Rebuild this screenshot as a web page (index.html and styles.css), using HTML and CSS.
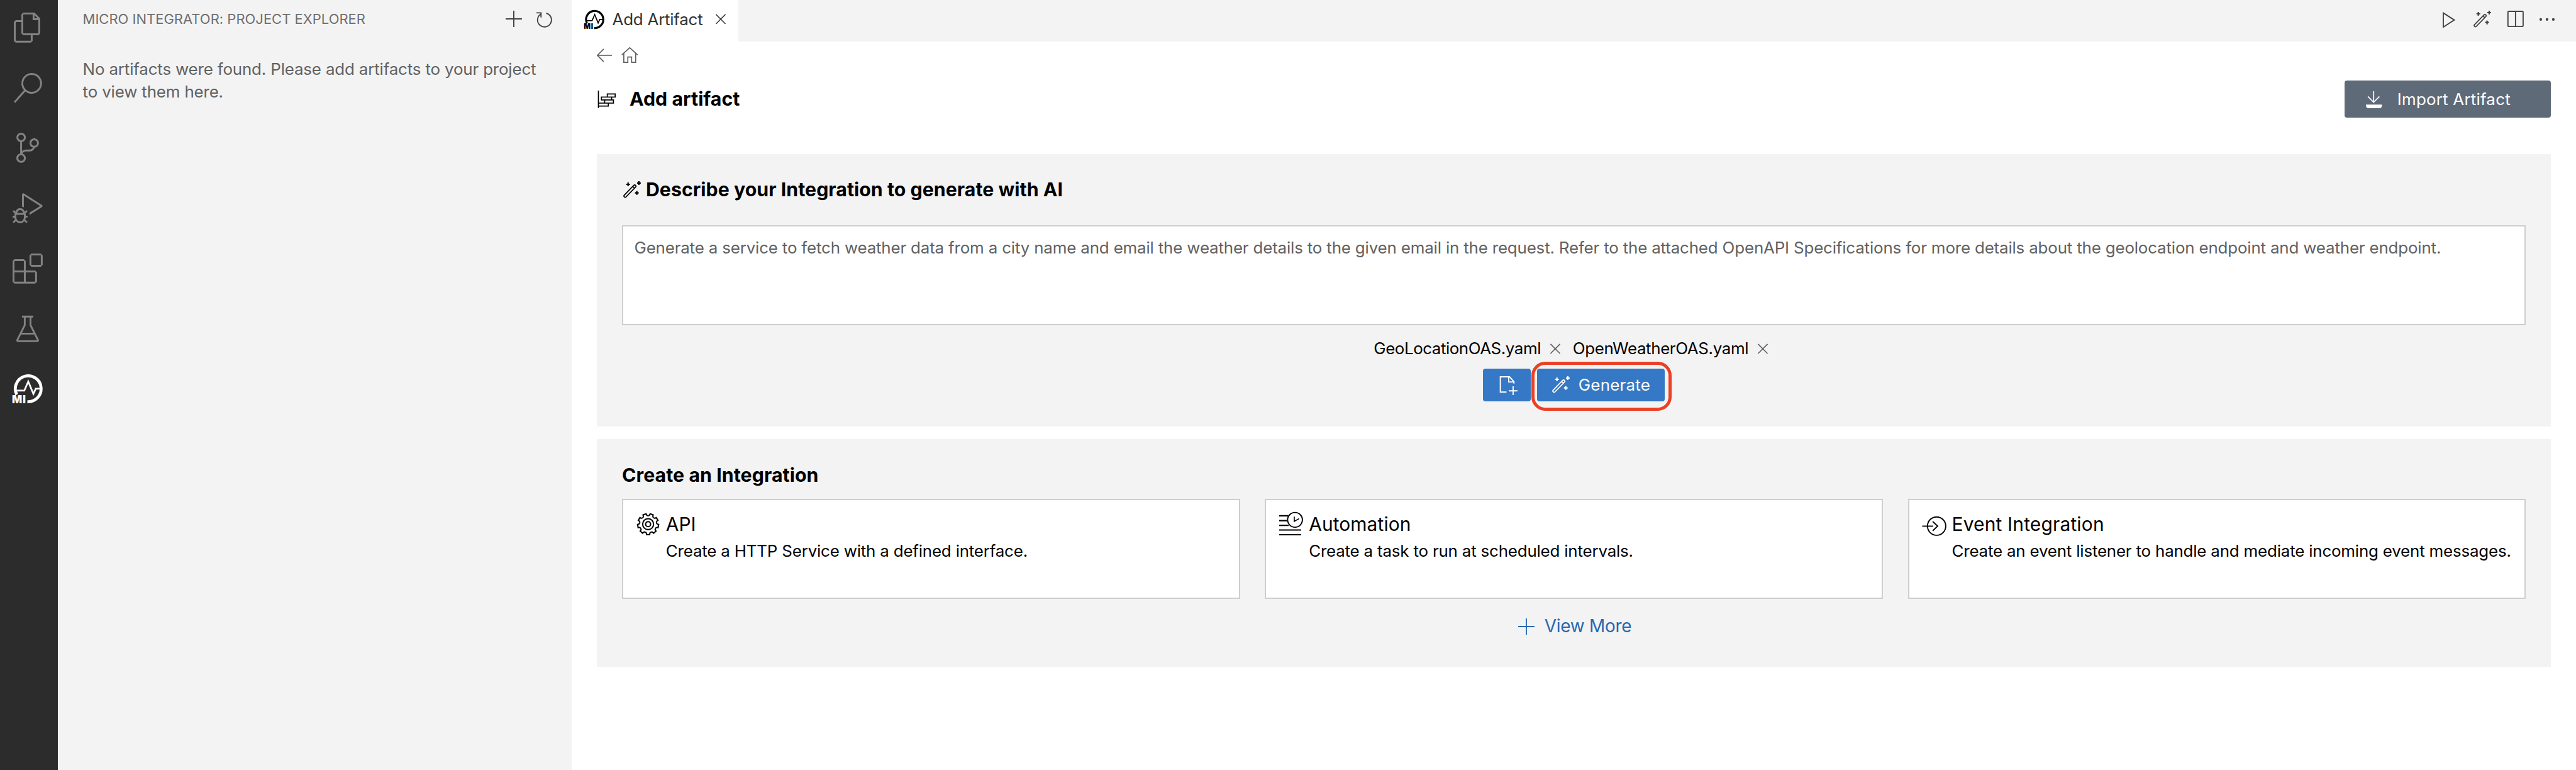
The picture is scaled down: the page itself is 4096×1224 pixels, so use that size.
FILE: index.html
```html
<!DOCTYPE html>
<html lang="en">
<head>
<meta charset="utf-8">
<title>Add Artifact</title>
<link rel="stylesheet" href="styles.css">
</head>
<body>
<svg class="defs" width="0" height="0" aria-hidden="true">
  <symbol id="mi" viewBox="0 0 48 48">
    <path d="M6.6 33.4A20.6 20.6 0 1 1 23.6 44.6" fill="none" stroke="currentColor" stroke-width="4.8"/>
    <path d="M6.5 27H18.7L25 12.4L33.2 32.2L37 24H44" fill="none" stroke="currentColor" stroke-width="2.7"/>
  </symbol>
  <symbol id="wand" viewBox="0 0 28 28">
    <path d="M1.5 22.4L17 6.5a2 2 0 0 1 2.8 2.8L4.3 25.2a2 2 0 0 1-2.8-2.8zM15.2 8.4l2.8 2.8" fill="none" stroke="currentColor" stroke-width="1.8"/>
    <path d="M7.7 2v6M4.7 5h6M25 0v6M22 3h6M21.7 15.7v6M18.7 18.7h6" fill="none" stroke="currentColor" stroke-width="2.2"/>
  </symbol>
  <symbol id="close" viewBox="0 0 18 18">
    <path d="M1 1L17 17M17 1L1 17" fill="none" stroke="currentColor" stroke-width="1.8"/>
  </symbol>
  <symbol id="plus" viewBox="0 0 26 26">
    <path d="M13 0V26M0 13H26" fill="none" stroke="currentColor" stroke-width="1.9"/>
  </symbol>
  <defs>
    <path id="tooth" d="M-4.65-12.78C-3.6-13.2-2.9-13.4-2.8-14.4L-2.5-16.6H2.5L2.8-14.4C2.9-13.4 3.6-13.2 4.65-12.78"/>
  </defs>
</svg>
<div class="window">
  <nav class="activity">
    <svg class="act" viewBox="0 0 24 24"><path d="M17.5 0h-9L7 1.5V6H2.5L1 7.5v15.07L2.5 24h12.07L16 22.57V18h4.7l1.3-1.43V4.5L17.5 0zm0 2.12l2.38 2.38H17.5V2.12zm-3 20.38h-12v-15H7v9.07L8.5 18h6v4.5zm6-6h-12v-15H16V6h4.5v10.5z"/></svg>
    <svg class="act" viewBox="0 0 24 24"><path d="M15.25 0a8.25 8.25 0 0 0-6.18 13.72L1 22.88l1.12 1 8.05-9.12A8.251 8.251 0 1 0 15.25.01V0zm0 15a6.75 6.75 0 1 1 0-13.5 6.75 6.75 0 0 1 0 13.5z"/></svg>
    <svg class="act" viewBox="0 0 24 24"><path d="M21.007 8.222A3.738 3.738 0 0 0 15.045 5.2a3.737 3.737 0 0 0 1.156 6.583 2.988 2.988 0 0 1-2.668 1.67h-2.99a4.456 4.456 0 0 0-2.989 1.165V7.4a3.737 3.737 0 1 0-1.494 0v9.117a3.776 3.776 0 1 0 1.816.099 2.99 2.99 0 0 1 2.668-1.667h2.99a4.484 4.484 0 0 0 4.223-3.039 3.736 3.736 0 0 0 3.25-3.687zM4.565 3.738a2.242 2.242 0 1 1 4.484 0 2.242 2.242 0 0 1-4.484 0zm4.484 16.441a2.242 2.242 0 1 1-4.484 0 2.242 2.242 0 0 1 4.484 0zm8.221-9.715a2.242 2.242 0 1 1 0-4.485 2.242 2.242 0 0 1 0 4.485z"/></svg>
    <svg class="act" viewBox="0 0 24 24"><path d="M10.94 13.5l-1.32 1.32a3.73 3.73 0 0 0-7.24 0L1.06 13.5 0 14.56l1.72 1.72-.22.22V18H0v1.5h1.5v.08c.077.489.214.966.41 1.42L0 22.94 1.06 24l1.65-1.65A4.308 4.308 0 0 0 6 24a4.31 4.31 0 0 0 3.29-1.65L10.94 24 12 22.94 10.09 21c.198-.464.336-.951.41-1.45v-.1H12V18h-1.5v-1.5l-.22-.22L12 14.56l-1.06-1.06zM6 13.5a2.25 2.25 0 0 1 2.25 2.25h-4.5A2.25 2.25 0 0 1 6 13.5zm3 6a3.33 3.33 0 0 1-3 3 3.33 3.33 0 0 1-3-3v-2.25h6v2.25zm14.76-9.9v1.26L13.5 17.37V15.6l8.5-5.37L9 2v9.46a5.07 5.07 0 0 0-1.5-.72V.63L8.64 0l15.12 9.6z"/></svg>
    <svg class="act" viewBox="0 0 24 24"><path d="M13.5 1.5L15 0h7.5L24 1.5V9l-1.5 1.5H15L13.5 9V1.5zm1.5 0V9h7.5V1.5H15zM0 15V6l1.5-1.5H9L10.5 6v7.5H18l1.5 1.5v7.5L18 24H1.5L0 22.5V15zm9-1.5V6H1.5v7.5H9zM9 15H1.5v7.5H9V15zm1.5 7.5H18V15h-7.5v7.5z"/></svg>
    <svg class="act line" viewBox="0 0 24 24"><path d="M7.5 2.15H16.5M9.7 2.15V9L3.8 20.7Q3.5 21.75 4.6 21.75H19.4Q20.5 21.75 20.2 20.7L14.3 9V2.15M6.6 15.75H17.4"/></svg>
    <svg class="act on" viewBox="0 0 48 48"><use href="#mi"/><text class="mi-text" x="-1" y="46.7" textLength="22">MI</text></svg>
  </nav>

  <aside class="sidebar">
    <header class="side-head">
      <span class="side-title">MICRO INTEGRATOR: PROJECT EXPLORER</span>
      <svg class="i26 side-plus" viewBox="0 0 26 26"><use href="#plus"/></svg>
      <svg class="i26 line" viewBox="0 0 26 26"><path class="w19" d="M1 2.4H8.3V9.7M8.3 3.9L7.4 4.7A11.1 11.1 0 1 0 16.6 3"/></svg>
    </header>
    <p class="side-text">No artifacts were found. Please add artifacts to your project<br>to view them here.</p>
  </aside>

  <main class="editor">
    <div class="tabbar">
      <div class="tab">
        <svg class="tab-mi" viewBox="0 0 48 48"><use href="#mi"/><text class="mi-text" x="-1" y="46.7" textLength="22">MI</text></svg>
        <span class="tab-text">Add Artifact</span>
        <svg class="x" viewBox="0 0 18 18"><use href="#close"/></svg>
      </div>
      <div class="actions">
        <svg class="i28 line" viewBox="0 0 28 28"><path class="w19" d="M5 3.6V26.2L22.6 14.9Z"/></svg>
        <svg class="i28" viewBox="0 0 28 28"><use href="#wand"/></svg>
        <svg class="i28 line" viewBox="0 0 28 28"><rect class="w19" x="2.8" y="1" width="24.2" height="24.2" rx="1.6"/><path class="w19" d="M14.9 1V25"/></svg>
        <svg class="i28" viewBox="0 0 28 28"><circle cx="4" cy="14" r="2.1"/><circle cx="14" cy="14" r="2.1"/><circle cx="24" cy="14" r="2.1"/></svg>
      </div>
    </div>

    <div class="nav">
      <svg class="i26 line" viewBox="0 0 26 26"><path class="w17" d="M24 13H1.2M11 2.8L.9 13L11 23.2"/></svg>
      <svg class="i26 line" viewBox="0 0 26 26"><path class="w17" d="M.8 12.2L13.3.9L25.8 12.2M3.9 9.6V24.2H10.3V15.6H16.4V24.2H22.8V9.6"/></svg>
    </div>

    <div class="page-head">
      <svg class="art-icon line" viewBox="0 0 30 30"><path class="w17" d="M2.5 1V28.8M16.7 6.3H29.3V11.3H16.7ZM7.3 11.3H23.6V15.9H7.3ZM12.5 16H26.5V21H12.5ZM2.5 21H18.3V25.7H2.5"/></svg>
      <h1 class="h">Add artifact</h1>
      <button class="import">
        <svg class="i28 line" viewBox="0 0 28 28"><path class="w17" d="M13.3 0V17.8M4.2 8.4L13.3 17.6L22.4 8.4"/><path class="tray" d="M1 21.3H26.6Q26.6 27 23 27H4.6Q1 27 1 21.3Z"/></svg>
        <span>Import Artifact</span>
      </button>
    </div>

    <section class="panel ai">
      <div class="ai-head"><svg class="i28" viewBox="0 0 28 28"><use href="#wand"/></svg><h2 class="h">Describe your Integration to generate with AI</h2></div>
      <div class="prompt">Generate a service to fetch weather data from a city name and email the weather details to the given email in the request. Refer to the attached OpenAPI Specifications for more details about the geolocation endpoint and weather endpoint.</div>
      <div class="files">
        <span class="file geo">GeoLocationOAS.yaml</span><svg class="x" viewBox="0 0 18 18"><use href="#close"/></svg>
        <span class="file weather">OpenWeatherOAS.yaml</span><svg class="x" viewBox="0 0 18 18"><use href="#close"/></svg>
      </div>
      <div class="buttons">
        <button class="btn attach"><svg class="i30 line" viewBox="0 0 30 30"><path class="w19" d="M23.3 11.8V8.7L16.4 1H1.6V25.4H11.5M15 1V9.2H23.3M22 16V30M15 23.3H29"/></svg></button>
        <button class="btn generate"><svg class="i28" viewBox="0 0 28 28"><use href="#wand"/></svg><span>Generate</span><i class="highlight"></i></button>
      </div>
    </section>

    <section class="panel create">
      <h2 class="h">Create an Integration</h2>
      <div class="cards">
        <article class="card">
          <svg class="card-icon line" viewBox="0 0 40 40"><g class="w21" transform="translate(19.6 20.3)">
            <use href="#tooth" transform="rotate(20)"/>
            <use href="#tooth" transform="rotate(60)"/>
            <use href="#tooth" transform="rotate(100)"/>
            <use href="#tooth" transform="rotate(140)"/>
            <use href="#tooth" transform="rotate(180)"/>
            <use href="#tooth" transform="rotate(220)"/>
            <use href="#tooth" transform="rotate(260)"/>
            <use href="#tooth" transform="rotate(300)"/>
            <use href="#tooth" transform="rotate(340)"/>
            <circle r="8.7"/><circle r="4"/></g></svg>
          <div><h3 class="card-title">API</h3><p class="card-text">Create a HTTP Service with a defined interface.</p></div>
        </article>
        <article class="card">
          <svg class="card-icon line" viewBox="0 0 40 40"><path class="w21" d="M1 6.9H15.5M1 14.7H13.2M1 22.2H16M1 29.6H36M1 37.1H36"/><circle class="w19" cx="26.2" cy="13.4" r="11.8"/><path class="w17" d="M25 8.3V15.8L32.8 11.4"/></svg>
          <div><h3 class="card-title auto">Automation</h3><p class="card-text">Create a task to run at scheduled intervals.</p></div>
        </article>
        <article class="card">
          <svg class="card-icon line" viewBox="0 0 40 40"><circle class="w19" cx="23.4" cy="23.4" r="14.6"/><path class="w19" d="M.5 23.4H18M17.2 16L25 23.4L17.2 30.8"/></svg>
          <div><h3 class="card-title event">Event Integration</h3><p class="card-text">Create an event listener to handle and mediate incoming event messages.</p></div>
        </article>
      </div>
      <a class="more"><svg class="i26" viewBox="0 0 26 26"><use href="#plus"/></svg><span>View More</span></a>
    </section>
  </main>
</div>
</body>
</html>
```
FILE: styles.css
```css
html { font-size: 9.9708px; }
* { box-sizing: border-box; margin: 0; padding: 0; }
body { background: #fff; font-family: Inter, "Liberation Sans", sans-serif; font-size: 2.6rem; line-height: 3.6rem; letter-spacing: -0.017rem; color: #000; }
svg { display: block; flex: none; fill: currentColor; overflow: visible; }
.defs { position: absolute; }
button { border: 0; font: inherit; color: #fff; }
.line { fill: none; stroke: currentColor; }
.tray { fill: currentColor; stroke: none; }
.w17 { stroke-width: 1.7; }
.w19 { stroke-width: 1.9; }
.w21 { stroke-width: 2.1; }
.i26 { width: 2.6rem; height: 2.6rem; }
.i28 { width: 2.8rem; height: 2.8rem; }
.i30 { width: 3rem; height: 3rem; }
.x { width: 1.8rem; height: 1.7rem; }
.h { font-size: 3.04rem; font-weight: 700; line-height: 4rem; letter-spacing: 0.003rem; }

.window { display: flex; width: 100vw; height: 100vh; overflow: hidden; }

.activity { flex: none; display: flex; flex-direction: column; gap: 4.8rem; width: 9.2rem; padding: 2rem 0 0 2rem; background: #2c2c2c; color: #838383; }
.act { width: 4.8rem; height: 4.8rem; }
.act.line { stroke-width: 1.45; }
.on { color: #fff; }
.mi-text { font: 900 17px Inter, "Liberation Sans", sans-serif; letter-spacing: 0; }

.sidebar { flex: none; width: 82rem; background: #f3f3f3; color: #616161; }
.side-head { display: flex; align-items: center; height: 6.2rem; padding: 0 3.1rem 0 4rem; color: #424242; }
.side-title { flex: 1; font-size: 2.2rem; letter-spacing: 0.004rem; color: #6f6f6f; }
.side-plus { margin: -0.2rem 2.3rem 0 0; }
.side-text { padding: 3.05rem 0 0 4rem; letter-spacing: -0.016rem; }

.editor { flex: 1; min-width: 0; display: flex; flex-direction: column; }
.tabbar { display: flex; justify-content: space-between; height: 6.6rem; padding-bottom: 0.4rem; background: #f3f3f3; color: #424242; }
.tab { display: flex; align-items: center; width: 26.5rem; height: 6.6rem; padding: 0 0 0.4rem 2rem; background: #fff; }
.tab-mi { width: 3.2rem; height: 3.2rem; margin-right: 1.25rem; color: #000; }
.tab-text { flex: 1; letter-spacing: -0.024rem; color: #333; }
.tab .x { margin-right: 1.85rem; }
.actions { display: flex; align-items: center; gap: 2.5rem; padding-right: 3.2rem; }
.actions .i28:nth-child(4) { margin-left: -0.2rem; }

.nav { display: flex; align-items: center; gap: 1.3rem; height: 4.4rem; padding-left: 4rem; color: #616161; }
.page-head { display: flex; align-items: center; height: 9.2rem; margin: 0.2rem 0 4.2rem; padding: 0 4rem; }
.art-icon { width: 3rem; height: 3rem; margin-right: 2.2rem; }
.page-head .h { flex: 1; }
.import { display: flex; align-items: center; gap: 2.3rem; width: 32.9rem; height: 6rem; padding-left: 3.3rem; border-radius: 0.4rem; background: #5f6a79; letter-spacing: 0.022rem; }
.import svg { margin-top: 0.2rem; }

.panel { margin: 0 4rem 2rem; padding: 0 4rem; background: #f3f3f3; }
.ai { height: 43.4rem; padding-top: 3.7rem; }
.ai-head { display: flex; align-items: center; gap: 0.8rem; padding-left: 0.2rem; }
.prompt { height: 16rem; margin-top: 3.6rem; padding: 1.6rem 1.75rem; border: 2px solid #cecece; background: #fff; color: #616161; white-space: nowrap; }
.files { display: flex; align-items: center; justify-content: center; height: 3rem; margin-top: 2.2rem; padding-right: 0.9rem; color: #616161; }
.file { color: #000; white-space: nowrap; margin-right: 1.4rem; }
.geo { letter-spacing: -0.045rem; }
.weather { margin-left: 1.9rem; letter-spacing: -0.037rem; }
.buttons { display: flex; justify-content: center; gap: 1rem; margin-top: 1.7rem; }
.btn { display: flex; align-items: center; justify-content: center; height: 5.2rem; border-radius: 0.4rem; background: #3478c6; }
.attach { width: 7.6rem; padding: 0.2rem 0 0 0.5rem; }
.generate { position: relative; width: 20.4rem; gap: 1.4rem; padding-left: 0.1rem; letter-spacing: 0.025rem; }
.highlight { position: absolute; inset: -1.1rem -1.1rem -1.5rem -0.9rem; border: 5px solid #eb4025; border-radius: 2.2rem; }

.create { height: 36.3rem; padding-top: 3.8rem; }
.create .h { letter-spacing: 0.006rem; }
.cards { display: grid; grid-template-columns: repeat(3, 1fr); gap: 4rem; margin-top: 1.7rem; }
.card { display: flex; gap: 0.8rem; height: 16rem; padding: 1.8rem 0 0 2rem; border: 2px solid #cecece; background: #fff; }
.card-icon { width: 4rem; height: 4rem; }
.card-title { font-size: 3rem; font-weight: 400; line-height: 4rem; letter-spacing: 0; padding-top: 0.1rem; }
.auto { letter-spacing: 0.01rem; }
.event { letter-spacing: 0.018rem; }
.card-text { margin-top: 0.5rem; letter-spacing: -0.019rem; white-space: nowrap; }
.more { display: flex; align-items: center; justify-content: center; gap: 1.6rem; height: 4rem; margin-top: 2.35rem; padding-left: 0.3rem; font-size: 2.8rem; letter-spacing: -0.025rem; color: #2868b0; }
```
